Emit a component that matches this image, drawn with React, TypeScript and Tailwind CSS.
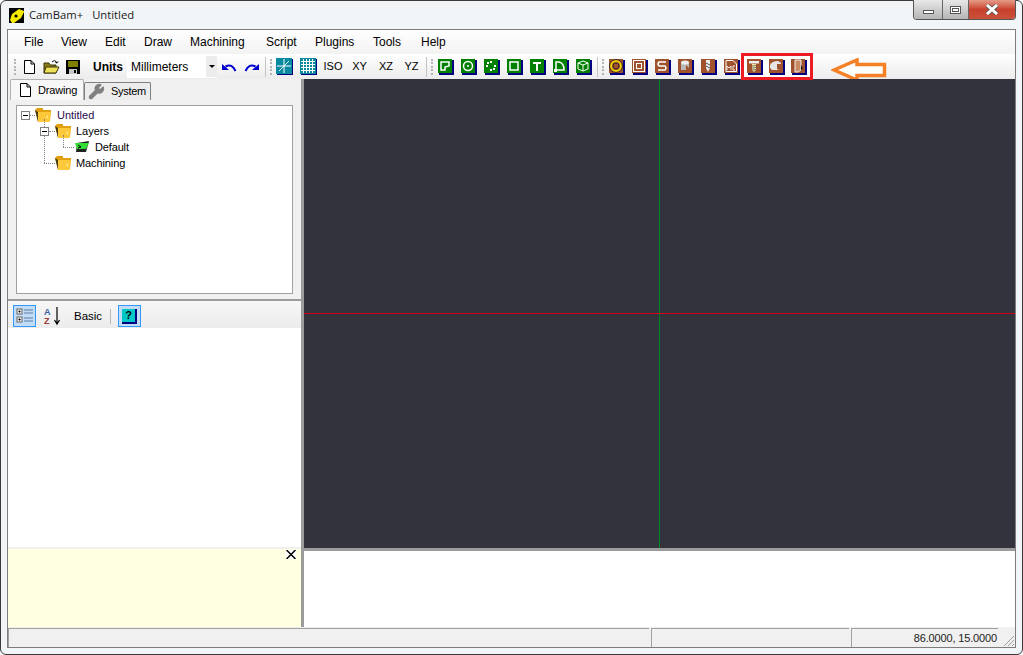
import { JSX, ReactNode } from "react";
import { Wrench } from "lucide-react";

const MENU = [
  { label: "File", w: "w-[37px]" },
  { label: "View", w: "w-[44px]" },
  { label: "Edit", w: "w-[39px]" },
  { label: "Draw", w: "w-[46px]" },
  { label: "Machining", w: "w-[76px]" },
  { label: "Script", w: "w-[49px]" },
  { label: "Plugins", w: "w-[58px]" },
  { label: "Tools", w: "w-[48px]" },
  { label: "Help", w: "w-[40px]" },
];

function Sep(): JSX.Element {
  return <div className="ml-[2px] mr-[3px] h-[20px] w-[1px] bg-[#c4c4c4]" />;
}

function Grip(): JSX.Element {
  return (
    <div className="mx-[1px] flex h-[20px] w-[2px] flex-col justify-between py-[2px]">
      {[0, 1, 2, 3, 4].map((i) => (
        <div key={i} className="h-[2px] w-[2px] bg-[#b4b4b4]" />
      ))}
    </div>
  );
}

// little 16px toolbar button with a navy drop shadow, green or brown
function ToolIcon({ color, children }: { color: string; children: ReactNode }): JSX.Element {
  return (
    <div className="flex h-[21px] w-[23px] items-center justify-center">
      <svg width="16" height="16" viewBox="0 0 16 16">
        <rect x="1" y="1" width="15" height="15" fill="#000080" />
        <rect x="0" y="0" width="14" height="14" fill={color} />
        {children}
      </svg>
    </div>
  );
}

const G = "#008000";
const B = "#a0522d";
const wht = { fill: "none", stroke: "#fff", strokeWidth: 1.5 };

function Folder(): JSX.Element {
  return (
    <svg width="17" height="16" viewBox="0 0 17 16" className="shrink-0">
      <path d="M0 3 L2 1 H8 V3 H16 L15 14 H3 Z" fill="#e0a010" />
      <path d="M0 3 L3 15 V5 Z" fill="#4a3a12" />
      <path d="M3 5 H16 L14.5 15 H3 Z" fill="#fdc93a" />
      <path d="M11 10 L13 8 V12 Z" fill="#ffe68a" />
    </svg>
  );
}

function Expander(): JSX.Element {
  return (
    <div className="z-10 flex h-[9px] w-[9px] shrink-0 items-center justify-center border border-[#808080] bg-white">
      <div className="h-[1px] w-[5px] bg-black" />
    </div>
  );
}

export default function App(): JSX.Element {
  return (
    <div className="h-[655px] w-[1023px] overflow-hidden font-['Liberation_Sans',sans-serif] text-[12px] text-black">
      <div className="flex h-[655px] flex-col rounded-[6px] border border-[#3a3a3a] bg-[#f2f5f8] px-[6px] pb-[6px]">
        {/* title bar */}
        <div className="relative flex h-[28px] shrink-0 items-center">
          <svg className="ml-[2px]" width="15" height="15" viewBox="0 0 15 15">
            <rect width="15" height="15" fill="#f5e900" />
            <path d="M0 0 H15 V3 L10 1 L3 6 L1 12 L3 15 H0 Z" fill="#000" />
            <path d="M15 4 L12 10 L5 15 H15 Z" fill="#000" />
            <circle cx="7" cy="8" r="1.6" fill="#000" />
          </svg>
          <span className="ml-[5px] font-['Open_Sans',sans-serif] text-[11.25px] text-[#1a1a1a]">CamBam+</span>
          <span className="ml-[9px] font-['Open_Sans',sans-serif] text-[11.25px] text-[#1a1a1a]">Untitled</span>
          {/* caption buttons */}
          <div className="absolute right-[0px] top-[-1px] flex h-[20px] w-[103px] overflow-hidden rounded-b-[4px] border border-t-0 border-[#555]">
            <div className="flex w-[29px] items-center justify-center border-r border-[#666] bg-gradient-to-b from-[#e8e8e8] to-[#b5b5b5]">
              <div className="mt-[5px] h-[4px] w-[11px] border border-[#555] bg-white" />
            </div>
            <div className="flex w-[26px] items-center justify-center border-r border-[#666] bg-gradient-to-b from-[#e8e8e8] to-[#b5b5b5]">
              <div className="flex h-[8px] w-[11px] items-center justify-center border border-[#555] bg-white">
                <div className="h-[4px] w-[7px] border border-[#555]" />
              </div>
            </div>
            <div className="flex flex-1 items-center justify-center bg-gradient-to-b from-[#e59a88] via-[#c8402a] to-[#c9523c]">
              <svg width="14" height="11" viewBox="0 0 14 11">
                <path d="M2 1 L12 10 M12 1 L2 10" stroke="#555" strokeWidth="4.5" />
                <path d="M2 1 L12 10 M12 1 L2 10" stroke="#fff" strokeWidth="3" />
              </svg>
            </div>
          </div>
        </div>

        {/* client area */}
        <div className="flex min-h-0 flex-1 flex-col border border-[#7d7d7d] bg-[#f0f0f0]">
          <div className="flex h-[24px] shrink-0 items-center bg-gradient-to-b from-white to-[#f3f3f3] pl-[16px]">
            {MENU.map((m) => (
              <span key={m.label} className={m.w}>{m.label}</span>
            ))}
          </div>

          {/* toolbar */}
          <div className="flex h-[25px] shrink-0 items-center bg-gradient-to-b from-white to-[#ececec] pl-[5px]">
            <Grip />
            <div className="flex w-[23px] justify-center">
              <svg width="16" height="16" viewBox="0 0 16 16">
                <path d="M3.5 1.5 H10 L13.5 5 V14.5 H3.5 Z M10 1.5 V5 H13.5" fill="#fff" stroke="#000" />
              </svg>
            </div>
            <div className="flex w-[23px] justify-center">
              <svg width="17" height="16" viewBox="0 0 17 16">
                <path d="M1 4 H6 L7 6 H13 V14 H1 Z" fill="#8a7a1a" stroke="#3a3408" />
                <path d="M3 8 H16 L13 14 H1 Z" fill="#efe05a" stroke="#3a3408" />
                <path d="M9 3 Q12 0 14 4 M14 4 L12.5 3.5 M14 4 L15 2.5" fill="none" stroke="#000" />
              </svg>
            </div>
            <div className="flex w-[20px] justify-center">
              <svg width="16" height="16" viewBox="0 0 16 16">
                <rect x="1" y="1" width="14" height="14" fill="#000" />
                <rect x="3" y="2" width="10" height="6" fill="#808000" />
                <rect x="4" y="10" width="8" height="5" fill="#c8c8c8" />
                <rect x="9" y="11" width="2" height="3" fill="#000" />
              </svg>
            </div>
            <span className="ml-[10px] w-[34px] font-bold">Units</span>
            <div className="flex h-[23px] w-[90px] items-center bg-white pl-[4px]">
              <span className="flex-1">Millimeters</span>
              <div className="flex h-[21px] w-[11px] items-center justify-center bg-[#ececec]">
                <div className="h-0 w-0 border-x-[3px] border-t-[3px] border-x-transparent border-t-black" />
              </div>
            </div>
            <div className="flex w-[23px] justify-center">
              <svg width="16" height="12" viewBox="0 0 16 12">
                <path d="M14.5 10 Q11 2 4.5 5.5" fill="none" stroke="#0000d0" strokeWidth="2" />
                <path d="M1 3 L8 9 H1 Z" fill="#0000d0" />
              </svg>
            </div>
            <div className="flex w-[23px] justify-center">
              <svg width="16" height="12" viewBox="0 0 16 12">
                <path d="M1.5 10 Q5 2 11.5 5.5" fill="none" stroke="#0000d0" strokeWidth="2" />
                <path d="M15 3 L8 9 H15 Z" fill="#0000d0" />
              </svg>
            </div>
            <Sep />
            <Grip />
            <div className="flex w-[23px] justify-center">
              <svg width="17" height="17" viewBox="0 0 17 17">
                <rect x="1" y="1" width="16" height="16" fill="#000080" />
                <rect width="16" height="16" fill="#0a8aa0" />
                <path d="M8 1 V15 M1 8 H15" stroke="#fff" strokeWidth="1" />
                <path d="M3 13 L13 3" stroke="#dff" strokeWidth="1" />
              </svg>
            </div>
            <div className="flex w-[24px] justify-center">
              <svg width="17" height="17" viewBox="0 0 17 17">
                <rect x="1" y="1" width="16" height="16" fill="#000080" />
                <rect width="16" height="16" fill="#0a8aa0" />
                <path d="M3.5 1 V15 M6.5 1 V15 M9.5 1 V15 M12.5 1 V15 M1 3.5 H15 M1 6.5 H15 M1 9.5 H15 M1 12.5 H15" stroke="#fff" strokeWidth="1" />
              </svg>
            </div>
            <span className="w-[26px] text-center text-[11px]">ISO</span>
            <span className="w-[27px] text-center text-[11px]">XY</span>
            <span className="w-[26px] text-center text-[11px]">XZ</span>
            <span className="w-[25px] text-center text-[11px]">YZ</span>
            <Sep />
            <Grip />
            <ToolIcon color={G}><path d="M3 11 V3 H11 V7 L7 8 V11 Z" {...wht} /></ToolIcon>
            <ToolIcon color={G}><circle cx="7" cy="7" r="4.5" {...wht} /><circle cx="7" cy="7" r="1" fill="#fff" /></ToolIcon>
            <ToolIcon color={G}>
              {[[7, 3], [11, 7], [7, 11], [3, 7], [4, 4], [10, 10]].map(([x, y]) => (
                <rect key={`${x}-${y}`} x={x - 1} y={y - 1} width="2" height="2" fill="#fff" />
              ))}
            </ToolIcon>
            <ToolIcon color={G}><rect x="3" y="3" width="8" height="8" {...wht} /></ToolIcon>
            <ToolIcon color={G}><path d="M3 3 H11 V5 H8 V12 H6 V5 H3 Z" fill="#fff" /></ToolIcon>
            <ToolIcon color={G}><path d="M3 11 V3 H6 Q11 4 11 11 Z" {...wht} /><rect x="1" y="10" width="3" height="3" fill="#fff" /></ToolIcon>
            <ToolIcon color={G}><path d="M7 2 L12 4 V10 L7 12 L2 10 V4 Z M2 4 L7 6 L12 4 M7 6 V12" fill="none" stroke="#fff" /></ToolIcon>
            <Sep />
            <Grip />
            <ToolIcon color={B}><circle cx="7" cy="7" r="5" fill="none" stroke="#f0d000" strokeWidth="2" /><circle cx="7" cy="7" r="6.5" fill="none" stroke="#222" strokeWidth="0.8" /><circle cx="7" cy="7" r="3" fill={B} stroke="#222" strokeWidth="0.8" /></ToolIcon>
            <ToolIcon color={B}><rect x="1.5" y="1.5" width="11" height="11" fill="none" stroke="#fff" /><rect x="4.5" y="4.5" width="5" height="5" fill="none" stroke="#fff" /></ToolIcon>
            <ToolIcon color={B}><path d="M11 3 H4 Q2 5 4 7 H10 Q12 9 10 11 H3" {...wht} /></ToolIcon>
            <ToolIcon color={B}><rect x="3" y="3" width="8" height="8" fill="#b8b8b8" /><ellipse cx="7" cy="3.5" rx="4" ry="2" fill="#eee" /><path d="M8 6 L11 9 V11 H8 Z" fill={B} /></ToolIcon>
            <ToolIcon color={B}><path d="M5 1 H9 V9 L7 13 L5 9 Z" fill="#eee" /><path d="M5 4 L9 6 M5 7 L9 9" stroke="#555" /></ToolIcon>
            <ToolIcon color={B}><path d="M2 1.5 H9 L12.5 5 V12.5 H2 Z" fill="none" stroke="#fff" /><path d="M3 11 V7 L5 9 L7 7 V11 M11 7 H9 V11 H11" fill="none" stroke="#fff" strokeWidth="0.9" /></ToolIcon>
            {/* highlighted group */}
            <div className="relative z-10 ml-[-2px] flex h-[27px] w-[72px] shrink-0 items-center justify-center border-[3px] border-[#ed1c24] bg-white">
              <ToolIcon color={B}>
                <path d="M2 2 H12 V4.5 H2 Z" fill="#eee" />
                <path d="M5 5 H9 V11 L7 13 L5 11 Z" fill="#f5e6a0" />
                <path d="M5 7 L9 6.5 M5 9 L9 8.5 M5 11 L9 10.5" stroke="#777" />
              </ToolIcon>
              <ToolIcon color={B}><path d="M1 6 Q3 2 9 2 L12 4 V9 L8 11 H3 L1 9 Z" fill="#e6e6e6" /><path d="M8 5 H13 V10 H8 Z" fill={B} /></ToolIcon>
              <ToolIcon color={B}><path d="M4 1 H10 V11 L7 13 H4 Z" fill="#c98a66" stroke="#eee" /><path d="M10 6 L12 9 L10 12 Z" fill="#222" /></ToolIcon>
            </div>
            {/* arrow annotation */}
            <svg className="ml-[18px] mt-[6px] shrink-0" width="56" height="24" viewBox="0 0 56 24">
              <path d="M3 12 L26 2 V6.5 H53.5 V17.5 H26 V22 Z" fill="#fff" stroke="#f58025" strokeWidth="3.5" />
            </svg>
          </div>

          {/* main */}
          <div className="flex min-h-0 flex-1">
            <div className="flex w-[293px] shrink-0 flex-col">
              {/* tabs + tree */}
              <div className="flex h-[220px] shrink-0 flex-col bg-[#f0f0f0] text-[11px]">
                <div className="flex h-[21px] shrink-0 items-end pl-[2px]">
                  <div className="flex h-[21px] w-[74px] items-center gap-[6px] rounded-t-[2px] border border-b-0 border-[#b0b0b0] bg-[#f7f7f7] pl-[8px] tracking-[-0.15px]">
                    <svg width="13" height="14" viewBox="0 0 13 14">
                      <path d="M1.5 0.5 H8 L11.5 4 V13.5 H1.5 Z M8 0.5 V4 H11.5" fill="#fff" stroke="#000" />
                    </svg>
                    <span>Drawing</span>
                  </div>
                  <div className="flex h-[18px] w-[67px] items-center gap-[6px] rounded-t-[2px] border border-b-0 border-[#808080] bg-[#ececec] pl-[3px] tracking-[-0.3px]">
                    <Wrench size={17} className="fill-[#808080] text-[#808080]" />
                    <span>System</span>
                  </div>
                </div>
                <div className="mx-[8px] mb-[5px] mt-[5px] flex-1 border border-[#a0a0a0] bg-white p-[1px]">
                  <div className="relative h-full">
                    <div className="flex h-[16px] items-center pl-[3px]">
                      <Expander />
                      <div className="w-[5px] border-t border-dotted border-[#808080]" />
                      <Folder />
                      <span className="ml-[5px] text-[#2a0a50]">Untitled</span>
                    </div>
                    <div className="flex h-[16px] items-center pl-[22px]">
                      <Expander />
                      <div className="w-[6px] border-t border-dotted border-[#808080]" />
                      <Folder />
                      <span className="ml-[4px]">Layers</span>
                    </div>
                    <div className="flex h-[16px] items-center pl-[45px]">
                      <div className="w-[11px] border-t border-dotted border-[#808080]" />
                      <svg width="17" height="14" viewBox="0 0 17 14">
                        <path d="M3 3 L15 1 L12 12 H2 Z" fill="#222" />
                        <path d="M1 3 H15 L12 9 H3 Z" fill="#33dd33" />
                        <path d="M4 5 L7 7 L4 8" fill="none" stroke="#000" />
                      </svg>
                      <span className="ml-[4px] tracking-[-0.15px]">Default</span>
                    </div>
                    <div className="flex h-[16px] items-center pl-[26px]">
                      <div className="w-[11px] border-t border-dotted border-[#808080]" />
                      <Folder />
                      <span className="ml-[4px] tracking-[-0.1px]">Machining</span>
                    </div>
                    {/* dotted tree stem */}
                    <div className="absolute left-[26px] top-[12px] h-[44px] w-[1px] border-l border-dotted border-[#808080]" />
                    <div className="absolute left-[45px] top-[28px] h-[12px] w-[1px] border-l border-dotted border-[#808080]" />
                  </div>
                </div>
              </div>
              <div className="h-[2px] shrink-0 bg-[#9c9c9c]" />
              {/* properties */}
              <div className="flex h-[27px] shrink-0 items-center bg-gradient-to-b from-[#f7f7f7] to-[#ececec] pl-[5px] pt-[3px]">
                <div className="flex h-[22px] w-[23px] items-center justify-center border border-[#3399ff] bg-[#c2dcf5]">
                  <svg width="18" height="18" viewBox="0 0 18 18">
                    <rect x="1" y="2" width="5" height="5" fill="#eee" stroke="#666" />
                    <rect x="1" y="10" width="5" height="5" fill="#eee" stroke="#666" />
                    <path d="M2.5 4.5 H4.5 M3.5 3.5 V5.5 M2.5 12.5 H4.5 M3.5 11.5 V13.5" stroke="#000" />
                    <path d="M8 3 H17 M8 6 H17 M8 11 H17 M8 14 H17" stroke="#5b7fa8" />
                  </svg>
                </div>
                <div className="ml-[5px] flex w-[24px] justify-center">
                  <svg width="20" height="20" viewBox="0 0 20 20">
                    <text x="1" y="9" fontSize="9" fontWeight="bold" fill="#3a5fa0" fontFamily="Liberation Sans">A</text>
                    <text x="1" y="18" fontSize="9" fontWeight="bold" fill="#9c3a3a" fontFamily="Liberation Sans">Z</text>
                    <path d="M14 1 V17 M11.5 14 L14 18 L16.5 14" fill="none" stroke="#000" strokeWidth="1.2" />
                  </svg>
                </div>
                <span className="ml-[9px] mt-[1px] w-[36px] text-[11.5px]">Basic</span>
                <div className="h-[15px] w-[1px] bg-[#b8b8b8]" />
                <div className="ml-[7px] flex h-[22px] w-[23px] items-center justify-center border border-[#3399ff] bg-[#c2dcf5]">
                  <div className="flex h-[15px] w-[15px] items-center justify-center border-b-2 border-r-2 border-[#000080] bg-[#00c8c8] text-[11px] font-bold leading-none">?</div>
                </div>
              </div>
              <div className="min-h-0 flex-1 bg-white" />
              <div className="h-[2px] shrink-0 bg-[#f0f0f0]" />
              {/* help panel */}
              <div className="relative h-[78px] shrink-0 bg-[#ffffe1]">
                <div className="absolute right-[5px] top-[1px] flex h-[9px] w-[10px] items-center justify-center bg-white">
                  <svg width="10" height="9" viewBox="0 0 10 9">
                    <path d="M0.5 0 L9.5 9 M9.5 0 L0.5 9" stroke="#000" strokeWidth="1.5" />
                  </svg>
                </div>
              </div>
            </div>
            <div className="w-[3px] shrink-0 bg-[#9c9c9c]" />
            <div className="flex min-w-0 flex-1 flex-col">
              <div className="relative h-[469px] shrink-0 bg-[#33333d]">
                <div className="absolute inset-y-0 left-[355px] w-[1px] bg-[#008a20]" />
                <div className="absolute inset-x-0 top-[234px] h-[1px] bg-[#d00018]" />
              </div>
              <div className="h-[3px] shrink-0 bg-[#9c9c9c]" />
              <div className="min-h-0 flex-1 bg-white" />
            </div>
          </div>

          {/* status bar */}
          <div className="flex h-[20px] shrink-0 items-stretch gap-[2px] bg-[#f0f0f0] pt-[1px] text-[11px] text-[#222]">
            <div className="w-[641px] border-l border-t border-[#a0a0a0]" />
            <div className="w-[198px] border-l border-t border-[#a0a0a0]" />
            <div className="flex w-[147px] items-center justify-end border-l border-t border-[#a0a0a0] pr-[1px] tracking-[-0.15px]">86.0000, 15.0000</div>
            <div className="relative flex-1">
              <svg className="absolute bottom-0 right-0" width="12" height="12" viewBox="0 0 12 12">
                <path d="M11 1 L1 11 M11 5 L5 11 M11 9 L9 11" stroke="#a0a0a0" />
              </svg>
            </div>
          </div>
        </div>
      </div>
    </div>
  );
}
